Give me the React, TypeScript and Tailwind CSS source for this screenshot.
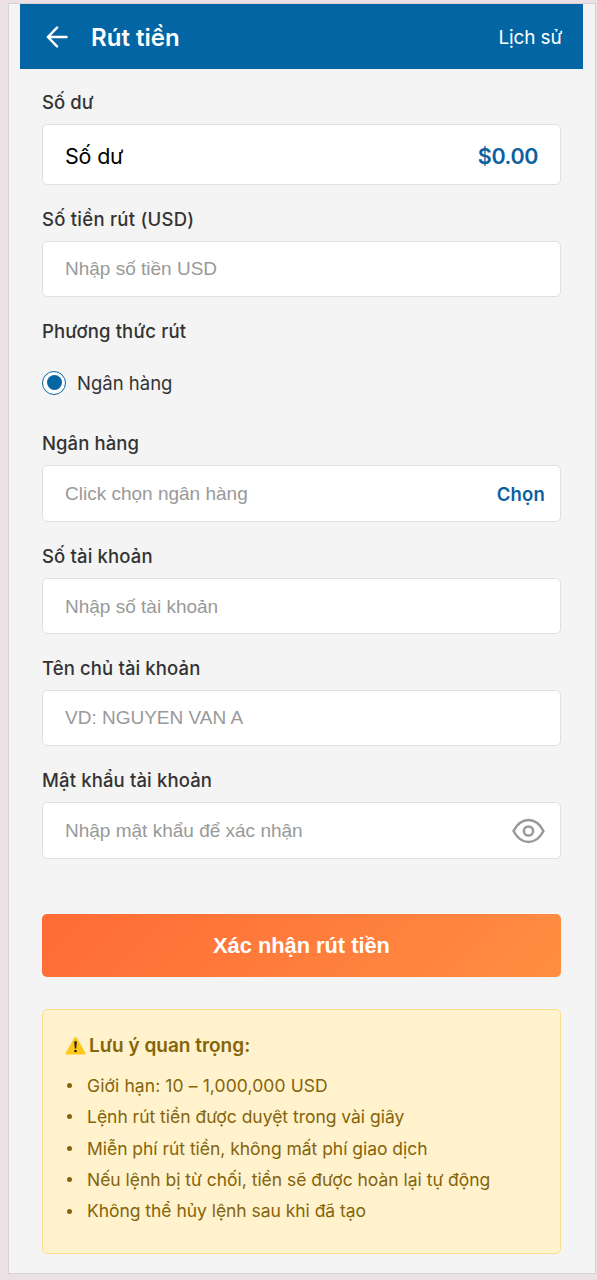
import { useState } from "react";

type FieldProps = {
  label: string;
  name: string;
  placeholder: string;
  type?: string;
  labelClass?: string;
  inputClass?: string;
  children?: React.ReactNode;
};

const notes = [
  { text: "Giới hạn: 10 – 1,000,000 USD", className: "tracking-[0.1px]" },
  { text: "Lệnh rút tiền được duyệt trong vài giây", className: "tracking-[-0.02px]" },
  { text: "Miễn phí rút tiền, không mất phí giao dịch", className: "tracking-[-0.03px]" },
  { text: "Nếu lệnh bị từ chối, tiền sẽ được hoàn lại tự động", className: "tracking-[-0.02px]" },
  { text: "Không thể hủy lệnh sau khi đã tạo", className: "tracking-[-0.04px]" },
];

const Label = ({
  children,
  className = "tracking-[0.08px]",
}: {
  children: React.ReactNode;
  className?: string;
}) => (
  <div
    className={`h-7 mb-2 text-[18.5px] leading-[28px] font-medium text-[#333] whitespace-nowrap ${className}`}
  >
    {children}
  </div>
);

const Field = ({
  label,
  name,
  placeholder,
  type = "text",
  labelClass,
  inputClass = "",
  children,
}: FieldProps) => (
  <div className="mb-5">
    <Label className={labelClass}>{label}</Label>
    <div className="flex items-center h-[56.4px] pl-[22px] pr-[15px] bg-white border border-[#e0e0e0] rounded-[5px]">
      <input
        type={type}
        name={name}
        placeholder={placeholder}
        className={`flex-1 min-w-0 h-full bg-transparent font-['Liberation_Sans',Arial,sans-serif] text-[19px] text-[#333] placeholder-[#999] focus:outline-none ${inputClass}`}
      />
      {children}
    </div>
  </div>
);

const WarningIcon = () => (
  <svg className="w-[21px] h-[19px] shrink-0" viewBox="0 0 21 19">
    <path
      d="M9.6 1.3a1.1 1.1 0 0 1 1.9 0l9 15.6a1 1 0 0 1-.9 1.5H1.5a1 1 0 0 1-.9-1.5z"
      fill="#fcc81c"
    />
    <path d="M9.3 6.2a1.25 1.25 0 0 1 2.5 0l-.5 6.2h-1.5z" fill="#2b2410" />
    <circle cx="10.55" cy="15" r="1.3" fill="#2b2410" />
  </svg>
);

const App = () => {
  const [showPassword, setShowPassword] = useState(false);

  return (
    <div className="h-[1280px] w-full overflow-hidden bg-[#ebe0e3] pt-[3px] pl-2 pr-px font-[Inter,sans-serif]">
      <div className="h-[1271px] bg-[#f4f4f4] border border-[#d9d2d5] pl-[11px] pr-3">
        <header className="flex items-center justify-between h-[65px] pl-[26px] pr-[21px] bg-[#0365a3] text-white">
          <div className="flex items-center">
            <svg
              className="w-[22px] h-[22px]"
              viewBox="0 0 22 22"
              fill="none"
              stroke="currentColor"
              strokeWidth="2.5"
              strokeLinecap="round"
              strokeLinejoin="round"
            >
              <path d="M20.500 11H2.200M11 1.700 1.900 11l9.100 9.300" />
            </svg>
            <h1 className="ml-[23px] pt-0.5 text-[24px] leading-8 font-semibold tracking-[0.02px]">
              Rút tiền
            </h1>
          </div>
          <button className="pt-[3px] text-[19px] tracking-[-0.15px]">
            Lịch sử
          </button>
        </header>

        <form
          className="px-[22px] pt-[19px]"
          onSubmit={(e) => e.preventDefault()}
        >
          <div className="mb-5">
            <Label>Số dư</Label>
            <div className="flex items-center justify-between h-[60.5px] px-[22px] pt-[3px] bg-white border border-[#e0e0e0] rounded-[5px] text-[21.5px]">
              <span className="text-black tracking-[-0.2px]">Số dư</span>
              <span className="font-semibold text-[#0b61a0] tracking-[-0.4px]">
                $0.00
              </span>
            </div>
          </div>

          <Field
            label="Số tiền rút (USD)"
            name="amount"
            placeholder="Nhập số tiền USD"
            labelClass="tracking-[0.25px]"
          />

          <div className="h-[112.3px]">
            <Label className="tracking-[0.15px]">Phương thức rút</Label>
            <label className="flex items-center w-fit h-7 mt-6 text-[18.5px] text-[#333]">
              <span className="flex items-center justify-center w-6 h-6 rounded-full border-[1.5px] border-[#0365a3] bg-white">
                <span className="w-[15px] h-[15px] rounded-full bg-[#0365a3]" />
              </span>
              <span className="ml-[11px] pt-0.5">Ngân hàng</span>
            </label>
          </div>

          <Field
            label="Ngân hàng"
            name="bank"
            placeholder="Click chọn ngân hàng"
            inputClass="pt-0.5"
          >
            <button
              type="button"
              className="pt-0.5 text-[18.5px] font-semibold text-[#0b61a0] tracking-[0.15px]"
            >
              Chọn
            </button>
          </Field>

          <Field
            label="Số tài khoản"
            name="account"
            placeholder="Nhập số tài khoản"
            labelClass="tracking-[0.15px]"
            inputClass="pt-0.5"
          />

          <Field
            label="Tên chủ tài khoản"
            name="owner"
            placeholder="VD: NGUYEN VAN A"
            labelClass="tracking-[0.12px]"
          />

          <Field
            label="Mật khẩu tài khoản"
            name="password"
            type={showPassword ? "text" : "password"}
            placeholder="Nhập mật khẩu để xác nhận"
            labelClass="tracking-[0.14px]"
          >
            <button type="button" onClick={() => setShowPassword(!showPassword)}>
              <svg
                className="w-[33px] h-[26px]"
                viewBox="0 0 33 26"
                fill="none"
                stroke="#999"
                strokeWidth="2.5"
                strokeLinejoin="round"
              >
                <path d="M1.500 13C5.500 5.500 10.500 2 16.500 2S27.500 5.500 31.500 13C27.500 20.500 22.500 24 16.500 24S5.500 20.500 1.500 13z" />
                <circle cx="16.500" cy="13" r="4.600" />
              </svg>
            </button>
          </Field>

          <button
            type="submit"
            className="mt-[35px] w-full h-[63px] pt-0.5 rounded-[5px] bg-[linear-gradient(135deg,#ff6b35,#ff8e42)] text-white text-[21.8px] font-bold font-['Liberation_Sans',Arial,sans-serif]"
          >
            Xác nhận rút tiền
          </button>
        </form>

        <div className="mx-[22px] mt-8 h-[245px] pl-[22px] pt-[21px] bg-[#fff2cd] border-[1.5px] border-[#f7e08c] rounded-[5px] text-[#85640a]">
          <div className="flex items-center h-[30px] text-[19px] font-semibold whitespace-nowrap">
            <WarningIcon />
            <span className="ml-[3px]">Lưu ý quan trọng:</span>
          </div>
          <ul className="mt-[9px] text-[17.5px] leading-[31.4px] whitespace-nowrap">
            {notes.map((note) => (
              <li key={note.text} className="flex items-center">
                <span className="w-[5px] h-[5px] ml-[2px] mr-[15px] rounded-full bg-current" />
                <span className={note.className}>{note.text}</span>
              </li>
            ))}
          </ul>
        </div>
      </div>
    </div>
  );
};

export default App;
